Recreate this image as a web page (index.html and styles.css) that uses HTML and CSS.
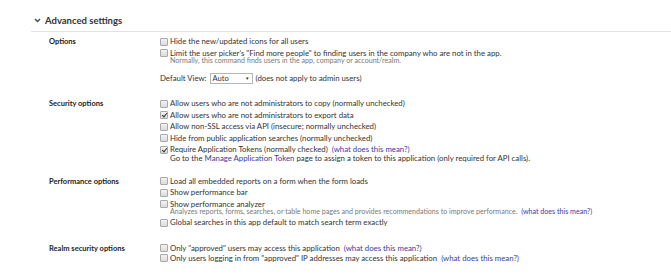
FILE: index.html
```html
<!DOCTYPE html>
<html lang="en">
<head>
    <meta charset="UTF-8">
    <title>Advanced settings</title>
    <link rel="stylesheet" href="styles.css">
</head>
<body>
    <div class="panel">
        <div class="panel-header">
            <span class="chevron">
                <svg width="7" height="5" viewBox="0 0 7 5"><path d="M1 1 L3.5 3.5 L6 1" fill="none" stroke="#444" stroke-width="1.3"/></svg>
            </span>
            <h2 class="panel-title">Advanced settings</h2>
        </div>

        <div class="group">
            <div class="group-label">Options</div>
            <div class="group-body">
                <label class="opt"><input type="checkbox"> Hide the new/updated icons for all users</label>
                <label class="opt"><input type="checkbox"> Limit the user picker's "Find more people" to finding users in the company who are not in the app.</label>
                <div class="hint">Normally, this command finds users in the app, company or account/realm.</div>
                <div class="view-row">
                    Default View:
                    <span class="select">Auto<span class="arrow">▼</span></span>
                    (does not apply to admin users)
                </div>
            </div>
        </div>

        <div class="group">
            <div class="group-label">Security options</div>
            <div class="group-body">
                <label class="opt"><input type="checkbox"> Allow users who are not administrators to copy (normally unchecked)</label>
                <label class="opt"><input type="checkbox" checked> Allow users who are not administrators to export data</label>
                <label class="opt"><input type="checkbox"> Allow non-SSL access via API (insecure; normally unchecked)</label>
                <label class="opt"><input type="checkbox"> Hide from public application searches (normally unchecked)</label>
                <label class="opt"><input type="checkbox" checked> Require Application Tokens (normally checked) <a href="#" class="link">(what does this mean?)</a></label>
                <div class="note">Go to the <a href="#" class="link">Manage Application Token</a> page to assign a token to this application (only required for API calls).</div>
            </div>
        </div>

        <div class="group">
            <div class="group-label">Performance options</div>
            <div class="group-body">
                <label class="opt"><input type="checkbox"> Load all embedded reports on a form when the form loads</label>
                <label class="opt"><input type="checkbox"> Show performance bar</label>
                <label class="opt"><input type="checkbox"> Show performance analyzer</label>
                <div class="hint">Analyzes reports, forms, searches, or table home pages and provides recommendations to improve performance. <a href="#" class="link">(what does this mean?)</a></div>
                <label class="opt"><input type="checkbox"> Global searches in this app default to match search term exactly</label>
            </div>
        </div>

        <div class="group">
            <div class="group-label">Realm security options</div>
            <div class="group-body">
                <label class="opt tight"><input type="checkbox"> Only "approved" users may access this application <a href="#" class="link">(what does this mean?)</a></label>
                <label class="opt tight"><input type="checkbox"> Only users logging in from "approved" IP addresses may access this application <a href="#" class="link">(what does this mean?)</a></label>
            </div>
        </div>
    </div>
</body>
</html>
```

FILE: styles.css
```css
body {
    margin: 0;
    font-family: 'Lato', 'Open Sans', sans-serif;
    background: #ffffff;
    color: #333;
    font-size: 7.8px;
}
.panel {
    padding-top: 14px;
}
.panel-header {
    display: flex;
    align-items: center;
    margin-left: 31px;
    padding-left: 3px;
    height: 12px;
    padding-bottom: 5px;
    border-bottom: 1px solid #e3e3e3;
}
.chevron {
    display: flex;
    width: 11px;
}
.panel-title {
    margin: 0;
    font-size: 9.5px;
    font-weight: 700;
    color: #333;
}
.group {
    display: grid;
    grid-template-columns: 111px 1fr;
    padding-left: 49px;
    margin-top: 4px;
    margin-bottom: 14px;
}
.group-label {
    font-weight: 700;
    font-size: 7.5px;
    line-height: 11px;
    color: #222;
}
.group-body {
    display: flex;
    flex-direction: column;
}
.opt {
    display: flex;
    align-items: center;
    gap: 2px;
    line-height: 11.5px;
    white-space: nowrap;
}
.opt.tight {
    line-height: 10px;
}
.opt .link {
    margin-left: 2px;
}
.opt input {
    appearance: none;
    -webkit-appearance: none;
    margin: 0;
    width: 8px;
    height: 8px;
    border: 1px solid #a9a9a9;
    border-radius: 1px;
    background: linear-gradient(#f2f2f2, #dcdcdc);
    position: relative;
    flex: none;
}
.opt input:checked::after {
    content: "";
    position: absolute;
    left: 2px;
    top: 0px;
    width: 2px;
    height: 4px;
    border: solid #333;
    border-width: 0 1.2px 1.2px 0;
    transform: rotate(40deg);
}
.hint {
    font-size: 7.1px;
    color: #7a7a7a;
    line-height: 7px;
    padding-left: 10px;
    margin-top: -2px;
    margin-bottom: 2px;
    white-space: nowrap;
}
.hint .link {
    margin-left: 2px;
}
.note {
    line-height: 8px;
    padding-left: 10px;
    margin-top: -2px;
    white-space: nowrap;
}
.link {
    color: #3b3ba0;
    text-decoration: none;
}
.view-row {
    display: flex;
    align-items: center;
    gap: 3px;
    margin-top: 7px;
    line-height: 11px;
}
.select {
    display: inline-flex;
    justify-content: space-between;
    align-items: center;
    width: 37px;
    height: 9px;
    padding: 0 2px;
    border: 1px solid #b5b5b5;
    font-size: 7.5px;
}
.arrow {
    font-size: 4.5px;
    color: #333;
}
```
